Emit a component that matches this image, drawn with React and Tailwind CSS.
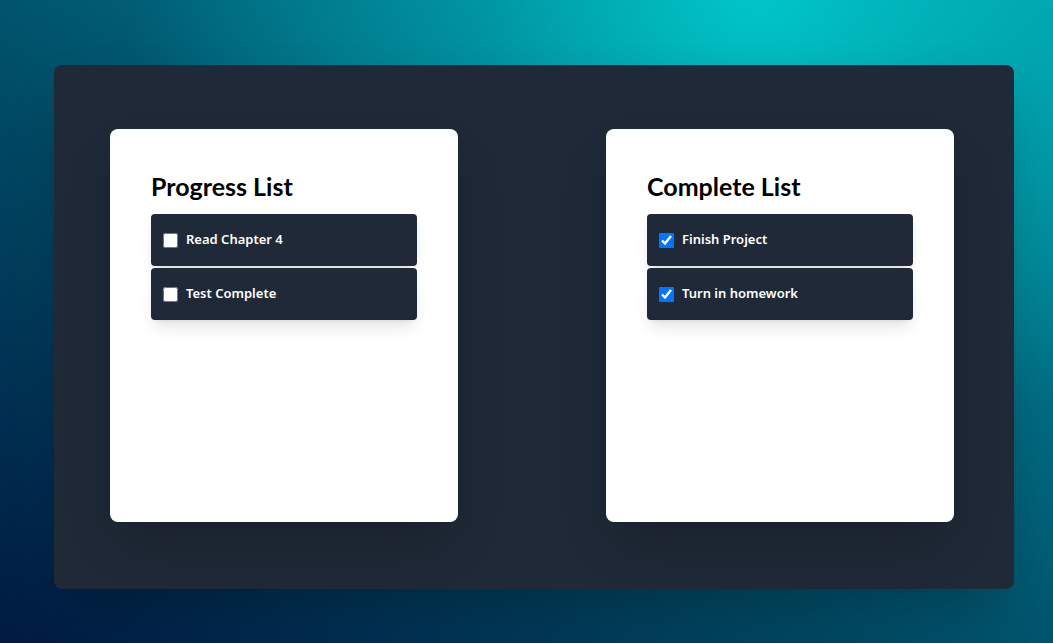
import React from 'react';

const lists = [
    {
        title: 'Progress List',
        items: [
            { name: 'Read Chapter 4', done: false },
            { name: 'Test Complete', done: false },
        ],
    },
    {
        title: 'Complete List',
        items: [
            { name: 'Finish Project', done: true },
            { name: 'Turn in homework', done: true },
        ],
    },
];

function TaskList({ title, items }) {
    return (
        <div className="w-[348px] h-[393px] bg-white rounded-lg px-[41px] pt-[42px] shadow-2xl">
            <h2 className="text-[25px] font-bold text-black leading-[30px] mb-[13px] font-['Lato',sans-serif]">{title}</h2>
            <div className="flex flex-col gap-[2px]">
                {items.map((item) => (
                    <label
                        key={item.name}
                        className="flex items-center h-[52px] px-3 bg-[#1f2937] rounded shadow-lg text-white text-[13px] font-semibold"
                    >
                        <input type="checkbox" defaultChecked={item.done} className="w-[15px] h-[15px] m-0 mr-2 accent-[#0075ff]" />
                        <span>{item.name}</span>
                    </label>
                ))}
            </div>
        </div>
    );
}

export default function App() {
    return (
        <div
            className="w-full h-screen overflow-hidden pt-[65px] pl-[54px] bg-[radial-gradient(ellipse_60%_70%_at_72%_0%,rgba(0,205,205,0.9)_0%,rgba(0,190,195,0.45)_45%,rgba(0,160,170,0)_100%),linear-gradient(to_top_right,#001a42_0%,#004862_40%,#006e84_70%,#0098a6_100%)]"
            style={{ fontFamily: '"Noto Sans", "Open Sans", sans-serif' }}
        >
            <div className="w-[960px] h-[524px] bg-[#1f2937] rounded-lg shadow-2xl flex gap-[148px] pl-[56px] pt-[64px]">
                {lists.map((l) => (
                    <TaskList key={l.title} title={l.title} items={l.items} />
                ))}
            </div>
        </div>
    );
}
